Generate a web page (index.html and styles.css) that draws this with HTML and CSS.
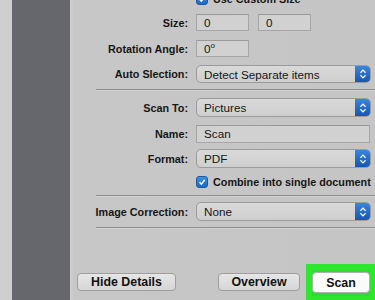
FILE: index.html
```html
<!DOCTYPE html>
<html>
<head>
<meta charset="utf-8">
<link rel="stylesheet" href="styles.css">
</head>
<body>
<div class="app">
  <div class="edge"></div>
  <div class="sidebar"></div>
  <div class="panel">
    <div class="row r-top">
      <span class="label"></span>
      <label class="check"><span class="box"><svg viewBox="0 0 12 12"><path d="M3 6.2 L5.2 8.6 L9.2 3.4" /></svg></span><span class="check-text">Use Custom Size</span></label>
    </div>
    <div class="row r-size">
      <span class="label">Size:</span>
      <div class="pair"><div class="input small">0</div><div class="input small">0</div></div>
    </div>
    <div class="row r-rot">
      <span class="label">Rotation Angle:</span>
      <div class="pair"><div class="input small">0<sup>o</sup></div></div>
    </div>
    <div class="row r-auto">
      <span class="label">Auto Slection:</span>
      <div class="select"><span>Detect Separate items</span><span class="arrows"><svg viewBox="0 0 14 16"><path d="M4 6.5 L7 3.5 L10 6.5 M4 9.5 L7 12.5 L10 9.5" /></svg></span></div>
    </div>
    <div class="sep s1"></div>
    <div class="row r-scanto">
      <span class="label">Scan To:</span>
      <div class="select"><span>Pictures</span><span class="arrows"><svg viewBox="0 0 14 16"><path d="M4 6.5 L7 3.5 L10 6.5 M4 9.5 L7 12.5 L10 9.5" /></svg></span></div>
    </div>
    <div class="row r-name">
      <span class="label">Name:</span>
      <div class="input wide">Scan</div>
    </div>
    <div class="row r-format">
      <span class="label">Format:</span>
      <div class="select"><span>PDF</span><span class="arrows"><svg viewBox="0 0 14 16"><path d="M4 6.5 L7 3.5 L10 6.5 M4 9.5 L7 12.5 L10 9.5" /></svg></span></div>
    </div>
    <div class="row r-combine">
      <span class="label"></span>
      <label class="check"><span class="box"><svg viewBox="0 0 12 12"><path d="M3 6.2 L5.2 8.6 L9.2 3.4" /></svg></span><span class="check-text">Combine into single document</span></label>
    </div>
    <div class="sep s2"></div>
    <div class="row r-corr">
      <span class="label">Image Correction:</span>
      <div class="select"><span>None</span><span class="arrows"><svg viewBox="0 0 14 16"><path d="M4 6.5 L7 3.5 L10 6.5 M4 9.5 L7 12.5 L10 9.5" /></svg></span></div>
    </div>
    <div class="sep s3"></div>
    <div class="buttons">
      <button class="btn hide">Hide Details</button>
      <div class="spacer"></div>
      <button class="btn overview">Overview</button>
      <div class="highlight"><button class="btn scan">Scan</button></div>
    </div>
  </div>
</div>
</body>
</html>
```

FILE: styles.css
```css
html, body {
  margin: 0;
  padding: 0;
  width: 375px;
  height: 300px;
  overflow: hidden;
  background: #c6c6c6;
}
.app {
  display: flex;
  width: 375px;
  height: 300px;
  font-family: "Liberation Sans", Arial, sans-serif;
  color: #161616;
}
.edge {
  width: 12px;
  background: #cfcfd0;
  flex: none;
}
.sidebar {
  width: 58px;
  background: #66676d;
  flex: none;
}
.panel {
  flex: 1;
  display: flex;
  flex-direction: column;
  background: linear-gradient(to right, #d0d0d0 0, #c7c7c7 4px, #c5c5c5 100%);
  overflow: hidden;
}
.row {
  display: grid;
  grid-template-columns: 118px 174px;
  column-gap: 8px;
  align-items: center;
  flex: none;
}
.label {
  text-align: right;
  font-weight: bold;
  font-size: 10.8px;
  white-space: nowrap;
}
.r-top { margin-top: -7px; height: 11px; }
.r-size { margin-top: 10px; height: 17px; }
.r-rot { margin-top: 9px; height: 17px; }
.r-auto { margin-top: 8px; height: 18px; }
.s1 { margin-top: 6px; }
.r-scanto { margin-top: 7px; height: 19px; }
.r-name { margin-top: 8px; height: 18px; }
.r-format { margin-top: 6px; height: 19px; }
.r-combine { margin-top: 8px; height: 11px; }
.s2 { margin-top: 8px; }
.r-corr { margin-top: 5px; height: 19px; }
.s3 { margin-top: 6px; }

.sep {
  flex: none;
  margin-left: 26px;
  height: 1px;
  background: #8c8c8c;
  border-bottom: 1px solid #d2d2d2;
}
.pair {
  display: flex;
  gap: 9px;
  height: 100%;
}
.input {
  box-sizing: border-box;
  height: 100%;
  background: #d1d1d1;
  border: 1px solid #a6a6a6;
  border-top-color: #999;
  font-size: 11.7px;
  padding-left: 7px;
  display: flex;
  align-items: center;
  line-height: 1;
}
.input.small { width: 53px; }
.input.wide { width: 174px; }
.input sup {
  font-size: 8px;
  align-self: flex-start;
  margin-top: 1px;
}
.select {
  box-sizing: border-box;
  height: 100%;
  width: 175px;
  display: flex;
  align-items: center;
  justify-content: space-between;
  background: linear-gradient(#d9d9d9, #cfcfcf);
  border: 1px solid #9b9b9b;
  border-radius: 5px;
  font-size: 11.7px;
  padding-left: 7px;
  overflow: hidden;
}
.arrows {
  width: 15px;
  height: 100%;
  background: linear-gradient(#3a86dc, #1456b4);
  display: flex;
  align-items: center;
  justify-content: center;
}
.arrows svg {
  width: 12px;
  height: 14px;
  fill: none;
  stroke: #fff;
  stroke-width: 1.4;
}
.check {
  display: flex;
  align-items: center;
  gap: 5px;
  height: 100%;
}
.box {
  box-sizing: border-box;
  width: 12px;
  height: 12px;
  flex: none;
  border-radius: 3px;
  background: linear-gradient(#3d92e0, #1d68c2);
  border: 1px solid #1a5aa8;
  display: flex;
  align-items: center;
  justify-content: center;
}
.box svg {
  width: 10px;
  height: 10px;
  fill: none;
  stroke: #fff;
  stroke-width: 1.8;
}
.check-text {
  font-weight: bold;
  font-size: 10.8px;
  white-space: nowrap;
}
.buttons {
  flex: none;
  margin-top: 34px;
  display: flex;
  align-items: center;
  padding-left: 7px;
  height: 38px;
}
.spacer { width: 42px; flex: none; }
.btn {
  box-sizing: border-box;
  font-family: "Liberation Sans", Arial, sans-serif;
  font-weight: bold;
  font-size: 12.4px;
  color: #111;
  height: 18px;
  border: 1px solid #9e9e9e;
  border-radius: 4px;
  background: linear-gradient(#e6e6e6, #d6d6d6);
  padding: 0;
  display: flex;
  align-items: center;
  justify-content: center;
  flex: none;
}
.hide { width: 99px; }
.overview { width: 82px; }
.highlight {
  box-sizing: border-box;
  margin-left: 6px;
  width: 70px;
  height: 38px;
  margin-top: 1px;
  border: 6px solid #2ee62e;
  border-right-width: 5px;
  background: #33d833;
  display: flex;
  align-items: center;
  justify-content: center;
}
.scan {
  width: 58px;
  height: 21px;
  background: #fbfbfb;
  border-color: #b0b0b0;
}
```
